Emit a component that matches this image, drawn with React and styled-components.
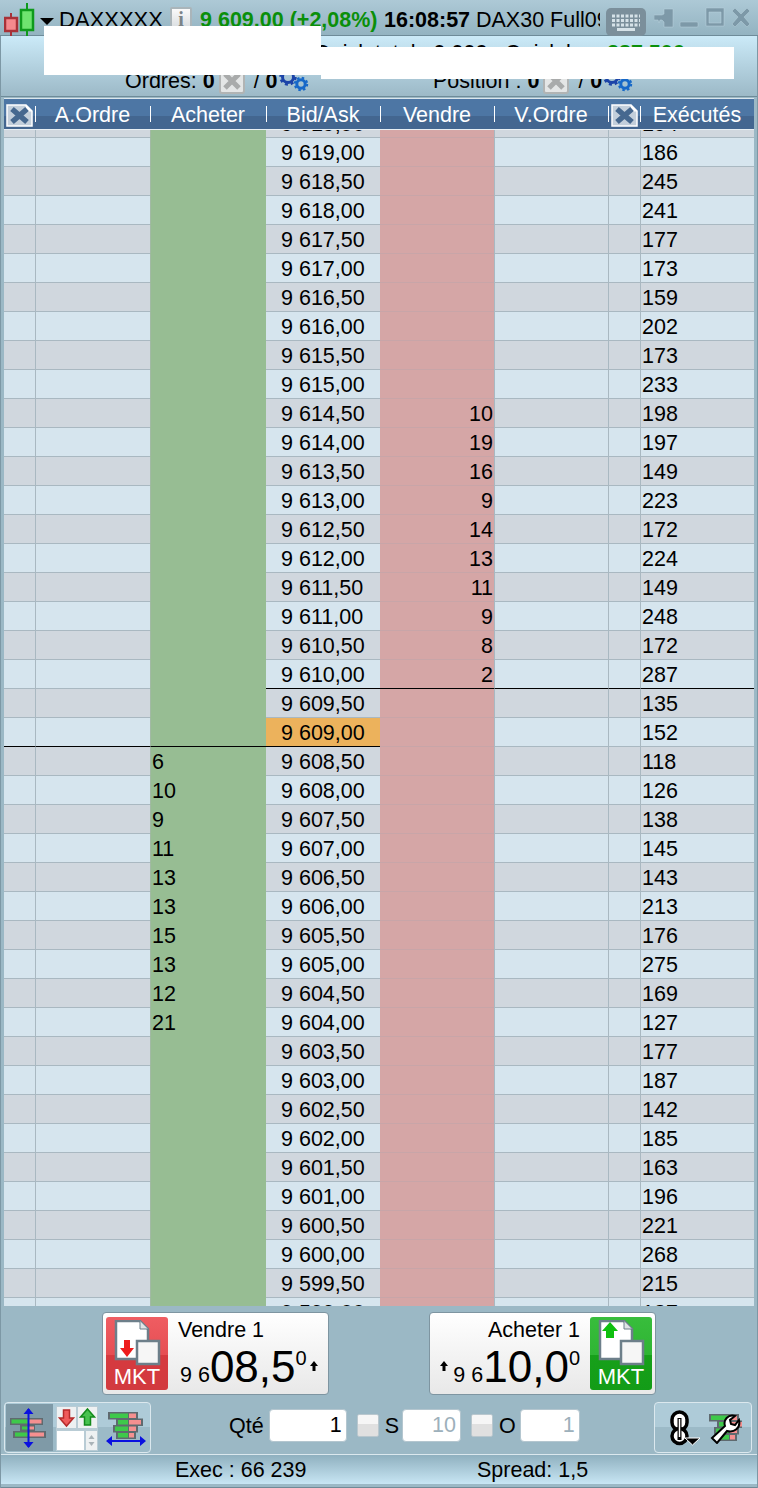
// Libraries
import React from 'react'
import styled, { createGlobalStyle } from 'styled-components'


// ============================================================================================================ Data

const EXECUTED = [
    194, 186, 245, 241, 177, 173, 159, 202, 173, 233, 198, 197, 149, 223, 172, 224, 149, 248, 172, 287, 135,
    152, 118, 126, 138, 145, 143, 213, 176, 275, 169, 127, 177, 187, 142, 185, 163, 196, 221, 268, 215, 187,
]
const SELL = { 9614.5: 10, 9614: 19, 9613.5: 16, 9613: 9, 9612.5: 14, 9612: 13, 9611.5: 11, 9611: 9, 9610.5: 8, 9610: 2 }
const BUY = { 9608.5: 6, 9608: 10, 9607.5: 9, 9607: 11, 9606.5: 13, 9606: 13, 9605.5: 15, 9605: 13, 9604.5: 12, 9604: 21 }

const ROWS = EXECUTED.map((executed, i) => ({ price: 9619.5 - i * 0.5, executed, alt: i % 2 === 0 }))

const formatPrice = (price) => {
    const [whole, decimals] = price.toFixed(2).split('.')
    return `${whole[0]} ${whole.slice(1)},${decimals}`
}


// ============================================================================================================ Icons

const Candles = () => (
    <svg width="32" height="34" viewBox="0 0 32 34">
        <path d="M7 10v24" stroke="#a83238" strokeWidth="2" />
        <rect x="1" y="15" width="12" height="13" fill="#f58a8e" stroke="#a83238" strokeWidth="2.500" />
        <path d="M23 0v33" stroke="#0f9a1c" strokeWidth="2" />
        <rect x="17" y="7" width="12" height="20" fill="#6fe46f" stroke="#0f9a1c" strokeWidth="2.500" />
    </svg>
)

const Keyboard = () => (
    <svg width="40" height="28" viewBox="0 0 40 28">
        <rect width="40" height="28" rx="5" fill="#7b8f9b" />
        <path d="M6 8h28M6 12.500h28M6 17h28" stroke="#d6e2e8" strokeWidth="3" strokeDasharray="3 1.500" />
        <rect x="11" y="20" width="18" height="3" fill="#d6e2e8" />
    </svg>
)

const WindowButtons = () => (
    <svg width="98" height="24" viewBox="0 0 98 24">
        <g fill="#7d99a8" stroke="#b9d2dd" strokeWidth="0.5">
            <path d="M0 9h8l2-1V3h9v18h-9v-5l-2-2H6l-1 3-1-3H0z" />
            <rect x="26" y="16" width="18" height="5" rx="1" />
            <path d="M52 2h18v18H52zM55 6v11h12V6z" fillRule="evenodd" />
            <path d="M78 5l3-3 6 6 6-6 3 3-6 6 6 7-3 3-6-6-6 6-3-3 6-7z" />
        </g>
    </svg>
)

const Gears = () => (
    <svg width="30" height="24" viewBox="0 0 30 24">
        <circle cx="9" cy="8" r="5.500" fill="none" stroke="#1b43a8" strokeWidth="3" />
        <circle cx="9" cy="8" r="7.500" fill="none" stroke="#1b43a8" strokeWidth="2.500" strokeDasharray="3 2.900" />
        <circle cx="22" cy="15" r="4.200" fill="none" stroke="#1668c8" strokeWidth="3" />
        <circle cx="22" cy="15" r="6.200" fill="none" stroke="#1668c8" strokeWidth="2" strokeDasharray="2.500 2.370" />
    </svg>
)

const CancelTile = () => (
    <svg width="26" height="26" viewBox="0 0 26 26">
        <rect x="1" y="1" width="24" height="24" rx="2" fill="#e4e6e6" stroke="#b1b4b4" strokeWidth="2" />
        <path d="M6 6l14 14M20 6L6 20" stroke="#a9abab" strokeWidth="5" />
    </svg>
)

const ClearDoc = () => (
    <svg width="27" height="23" viewBox="0 0 27 23">
        <path d="M1 1h19l6 6v15H1z" fill="#c3cfdb" stroke="#fff" strokeWidth="1.500" />
        <path d="M20 1v6h6" fill="#fff" stroke="#fff" />
        <path d="M6 5l15 13M21 5L6 18" stroke="#46688f" strokeWidth="5.500" />
    </svg>
)

const OrderDoc = ({ up }) => (
    <svg width="62" height="46" viewBox="0 0 62 46">
        <path d="M10 1h24l8 8v30H10z" fill="#fff" stroke="#6d7f8a" strokeWidth="2.500" />
        <path d="M34 1v8h8" fill="#dfe4e6" stroke="#6d7f8a" strokeWidth="1" />
        {up
            ? <path d="M20 2l8 9h-4v7h-8v-7h-4z" fill="#0fbf0f" />
            : <path d="M18 20h6v8h4l-7 9-7-9h4z" fill="#ee1c1c" />}
        <rect x="31" y="21" width="22" height="23" fill="#f6f6f6" stroke="#6d7f8a" strokeWidth="2.500" />
    </svg>
)

const Tick = () => (
    <svg width="8" height="10" viewBox="0 0 8 10">
        <path d="M4 0l4 5H5.500v5h-3V5H0z" fill="#000" />
    </svg>
)

const Bricks = ({ x = 0, y = 0 }) => (
    <g transform={`translate(${x} ${y})`}>
        {[[0, 20, 10], [8, 12, 15], [5, 15, 10], [8, 12, 8]].map(([left, green, red], i) => (
            <g key={i}>
                <rect x={left} y={i * 6.5} width={green + red} height="7.500" fill="#5f6a6f" />
                <rect x={left + 2} y={i * 6.5 + 1.500} width={green - 2} height="4.500" fill="#3ec94a" />
                <rect x={left + green + 1} y={i * 6.5 + 1.500} width={red - 3} height="4.500" fill="#f59090" />
            </g>
        ))}
    </g>
)

const VerticalFit = () => (
    <svg width="38" height="40" viewBox="0 0 38 40">
        <rect x="1" y="10" width="33" height="7" fill="#5f6a6f" />
        <rect x="2.500" y="11.500" width="17" height="4" fill="#3ec94a" />
        <rect x="20" y="11.500" width="12.500" height="4" fill="#f59090" />
        <rect x="11" y="17" width="15" height="6" fill="#5f6a6f" />
        <rect x="13" y="18.500" width="6" height="3" fill="#3ec94a" />
        <rect x="20" y="18.500" width="5" height="3" fill="#f59090" />
        <rect x="4" y="23" width="33" height="7" fill="#5f6a6f" />
        <rect x="6" y="24.500" width="13" height="4" fill="#3ec94a" />
        <rect x="20" y="24.500" width="15" height="4" fill="#f59090" />
        <path d="M19.500 1v38" stroke="#0a10e0" strokeWidth="2" />
        <path d="M19.500 0l5 6h-10zM19.500 40l5-6h-10z" fill="#0a10e0" />
    </svg>
)

const HorizontalFit = () => (
    <svg width="40" height="40" viewBox="0 0 40 40">
        <Bricks x="2" y="4" />
        <path d="M3 33h34" stroke="#0a10e0" strokeWidth="2" />
        <path d="M0 33l6-5v10zM40 33l-6-5v10z" fill="#0a10e0" />
    </svg>
)

const ArrowTile = ({ up }) => (
    <svg width="19" height="21" viewBox="0 0 19 21">
        <rect width="19" height="21" fill="#eef1f2" />
        {up
            ? <path d="M9.500 2l7 8h-4v8h-6v-8h-4z" fill="#47c24f" stroke="#138a1c" strokeWidth="1.500" />
            : <path d="M6.500 3h6v8h4l-7 8-7-8h4z" fill="#ef5a5a" stroke="#b52a2a" strokeWidth="1.500" />}
    </svg>
)

const Spinner = () => (
    <svg width="11" height="19" viewBox="0 0 11 19">
        <rect width="11" height="19" fill="#eef1f2" />
        <path d="M5.500 4l3 4h-6zM5.500 15l3-4h-6z" fill="#a9b3b8" />
    </svg>
)

const ChainLink = () => (
    <svg width="30" height="36" viewBox="0 0 30 36">
        <rect x="2" y="2" width="15" height="18" rx="7.500" fill="#fff" stroke="#000" strokeWidth="3.500" />
        <circle cx="9.500" cy="26" r="7.500" fill="#fff" stroke="#000" strokeWidth="3.500" />
        <path d="M9.500 8v22" stroke="#000" strokeWidth="4" />
        <path d="M9.500 9v18" stroke="#fff" strokeWidth="1.500" />
        <path d="M15 28h15l-7.500 7z" fill="#000" stroke="#fff" strokeWidth="1" />
    </svg>
)

const BrickWrench = () => (
    <svg width="34" height="32" viewBox="0 0 34 32">
        <Bricks x="1" y="2" />
        <path d="M4 26L17 14c-2-6 3-12 10-10l-5 4 1 4 4 1 4-5c2 8-5 13-12 11L9 31z" fill="#fff" stroke="#000" strokeWidth="2" />
    </svg>
)


// ============================================================================================================ Logic

const OrderButton = ({ side, label, head, tail, up }) => {
    const sell = side === 'sell'
    const tile = (
        <Tile $sell={sell}>
            <OrderDoc up={up} />
            <TileText>MKT</TileText>
        </Tile>
    )
    return (
        <OrderCard>
            {sell && tile}
            <OrderBody $sell={sell}>
                <OrderLabel>{label}</OrderLabel>
                <PriceLine>
                    {!sell && <TickSlot $sell={sell}><Tick /></TickSlot>}
                    <PriceHead>{head}</PriceHead>
                    <PriceBig>{tail}</PriceBig>
                    <PriceSup>0</PriceSup>
                    {sell && <TickSlot $sell={sell}><Tick /></TickSlot>}
                </PriceLine>
            </OrderBody>
            {!sell && tile}
        </OrderCard>
    )
}

const LadderRow = ({ row }) => {
    const { price, executed, alt } = row
    const upperLine = price === 9609.5
    const lowerLine = price === 9608.5
    return (
        <Row>
            <Cell $alt={alt} $lower={lowerLine} />
            <Cell $alt={alt} $lower={lowerLine} />
            <BuyCell $lower={lowerLine}>{BUY[price]}</BuyCell>
            <PriceCell $alt={alt} $upper={upperLine} $lower={lowerLine} $last={price === 9609}>
                {formatPrice(price)}
            </PriceCell>
            <SellCell $upper={upperLine}>{SELL[price]}</SellCell>
            <Cell $alt={alt} $upper={upperLine} />
            <Cell $alt={alt} $upper={upperLine} />
            <ExecCell $alt={alt} $upper={upperLine}>{executed}</ExecCell>
        </Row>
    )
}

const App = () => (
    <Window>
        <GlobalStyle />
        <TitleBar>
            <CandleSlot><Candles /></CandleSlot>
            <Caret />
            <Symbol>DAXXXXX</Symbol>
            <InfoBadge>i</InfoBadge>
            <LastPrice>9 609,00 (+2,08%)</LastPrice>
            <Clock>16:08:57</Clock>
            <Contract>DAX30 Full09</Contract>
            <KeyboardSlot><Keyboard /></KeyboardSlot>
            <WindowSlot><WindowButtons /></WindowSlot>
        </TitleBar>

        <InfoStrip>
            <StatsLine>
                <StatFirst>Quick total : <b>0,006</b></StatFirst>
                <StatSecond>Quick bar</StatSecond>
                <StatGain>287,506</StatGain>
            </StatsLine>
            <CountsLine>
                <CountGroup>
                    <span>Ordres: <b>0</b></span>
                    <CancelTile />
                    <CountTotal>/ <b>0</b></CountTotal>
                    <GearSlot><Gears /></GearSlot>
                </CountGroup>
                <CountGroup>
                    <span>Position : <b>0</b></span>
                    <CancelTile />
                    <CountTotal>/ <b>0</b></CountTotal>
                    <GearSlot><Gears /></GearSlot>
                </CountGroup>
            </CountsLine>
        </InfoStrip>
        <MaskLeft />
        <MaskRight />

        <HeaderRow>
            <HeadCell $first><ClearDoc /></HeadCell>
            <HeadCell>A.Ordre</HeadCell>
            <HeadCell>Acheter</HeadCell>
            <HeadCell>Bid/Ask</HeadCell>
            <HeadCell>Vendre</HeadCell>
            <HeadCell>V.Ordre</HeadCell>
            <HeadCell><ClearDoc /></HeadCell>
            <HeadCell>Exécutés</HeadCell>
        </HeaderRow>

        <Ladder>
            <LadderInner>
                {ROWS.map((row) => <LadderRow key={row.price} row={row} />)}
            </LadderInner>
        </Ladder>

        <OrderBar>
            <OrderButton side="sell" label="Vendre 1" head="9 6" tail="08,5" />
            <OrderButton side="buy" label="Acheter 1" head="9 6" tail="10,0" up />
        </OrderBar>

        <ToolRow>
            <ToolBox>
                <ToolActive><VerticalFit /></ToolActive>
                <ArrowGrid>
                    <ArrowRow>
                        <ArrowTile />
                        <ArrowTile up />
                    </ArrowRow>
                    <ArrowRow>
                        <StepField />
                        <Spinner />
                    </ArrowRow>
                </ArrowGrid>
                <ToolPlain><HorizontalFit /></ToolPlain>
            </ToolBox>
            <QtyGroup>
                <QtyLabel $gap={5}>Qté</QtyLabel>
                <QtyField $width={78} readOnly value="1" />
                <Check />
                <QtyLabel $gap={3}>S</QtyLabel>
                <QtyField $width={59} $muted readOnly value="10" />
                <Check />
                <QtyLabel $gap={4}>O</QtyLabel>
                <QtyField $width={60} $muted readOnly value="1" />
            </QtyGroup>
            <SettingsBox>
                <ChainLink />
                <BrickWrench />
            </SettingsBox>
        </ToolRow>

        <StatusBar>
            <StatusExec>Exec : 66 239</StatusExec>
            <StatusSpread>Spread: 1,5</StatusSpread>
        </StatusBar>
    </Window>
)


// ============================================================================================================ Styles

const COLUMNS = '31px 115px 116px 114px 114px 114px 32px 114px'
const LINE = '#a9b8c1'

const GlobalStyle = createGlobalStyle`
    html, body {
        margin: 0;
        padding: 0;
        background: #9bb8c5;
    }
    body {
        font-family: "Liberation Sans", Arial, sans-serif;
        font-size: 21.5px;
        color: #000;
    }
    * {
        box-sizing: border-box;
    }
`

const Window = styled.div`
    position: relative;
    display: flex;
    flex-direction: column;
    width: 758px;
    height: 1488px;
    overflow: hidden;
    background: #9bb8c5;
    box-shadow: inset 1px 0 #7d98a5, inset -1px 0 #7d98a5, inset 0 -1px #6f8a97;
`

const TitleBar = styled.div`
    display: flex;
    align-items: flex-start;
    height: 36px;
    background: linear-gradient(#adc9d6, #93b3c1);
    line-height: 40px;
    white-space: nowrap;
    border-bottom: 1px solid #6e8b99;
`

const CandleSlot = styled.div`
    width: 36px;
    padding: 3px 0 0 4px;
    line-height: 0;
`

const Caret = styled.div`
    width: 0;
    height: 0;
    margin: 18px 5px 0 4px;
    border-left: 7px solid transparent;
    border-right: 7px solid transparent;
    border-top: 7px solid #000;
`

const Symbol = styled.div`
    width: 111px;
    font-size: 22px;
`

const InfoBadge = styled.div`
    width: 22px;
    height: 24px;
    margin: 7px 8px 0 0;
    border: 2px solid #aab5ba;
    border-radius: 2px;
    background: linear-gradient(#fafafa, #d8dcde);
    color: #7c8488;
    font: bold 20px/20px "Liberation Serif", serif;
    text-align: center;
`

const LastPrice = styled.div`
    width: 184px;
    color: #0a8f0a;
    font-weight: bold;
`

const Clock = styled.div`
    width: 92px;
    font-weight: bold;
`

const Contract = styled.div`
    width: 124px;
    margin-right: 6px;
    overflow: hidden;
`

const KeyboardSlot = styled.div`
    width: 48px;
    padding-top: 8px;
    line-height: 0;
`

const WindowSlot = styled.div`
    padding-top: 6px;
    line-height: 0;
`

const InfoStrip = styled.div`
    height: 61px;
    margin: 0 1px;
    background: linear-gradient(#cbeaf8, #9cb9c7);
    border-bottom: 1px solid #6e8b99;
`

const StatsLine = styled.div`
    display: flex;
    height: 24px;
    padding: 5px 0 0 313px;
    line-height: 24px;
    white-space: nowrap;
`

const StatFirst = styled.div`
    width: 191px;
`

const StatSecond = styled.div`
    width: 102px;
`

const StatGain = styled.div`
    color: #0a8f0a;
    font-weight: bold;
`

const CountsLine = styled.div`
    display: flex;
    padding: 8px 0 0 124px;
`

const CountGroup = styled.div`
    display: flex;
    align-items: center;
    gap: 4px;
    width: 308px;
    height: 26px;
    white-space: nowrap;
`

const CountTotal = styled.span`
    margin-left: 5px;
`

const GearSlot = styled.div`
    margin-left: -3px;
    line-height: 0;
`

const MaskLeft = styled.div`
    position: absolute;
    left: 44px;
    top: 26px;
    width: 277px;
    height: 49px;
    background: #fff;
`

const MaskRight = styled.div`
    position: absolute;
    left: 321px;
    top: 47px;
    width: 413px;
    height: 32px;
    background: #fff;
`

const HeaderRow = styled.div`
    display: grid;
    grid-template-columns: ${COLUMNS};
    height: 32px;
    margin: 1px 4px 0;
    border-top: 1px solid #dbe6ec;
    border-bottom: 1px solid #e8eff3;
    background: linear-gradient(#4d76a4 0 58%, #436690 58% 100%);
`

const HeadCell = styled.div`
    position: relative;
    display: flex;
    align-items: center;
    justify-content: center;
    padding-top: 1px;
    color: #fff;
    line-height: 30px;

    &::before {
        content: ${({ $first }) => ($first ? 'none' : '""')};
        position: absolute;
        left: 0;
        top: 7px;
        width: 1px;
        height: 16px;
        background: #fff;
    }
`

const Ladder = styled.div`
    height: 1176px;
    margin: 0 4px;
    overflow: hidden;
`

const LadderInner = styled.div`
    margin-top: -22px;
`

const Row = styled.div`
    display: grid;
    grid-template-columns: ${COLUMNS};
    height: 29px;
`

const markColor = ({ $upper, $lower }) => ($upper || $lower ? '#000' : LINE)

const Cell = styled.div`
    height: 29px;
    border-top: 1px solid ${markColor};
    border-left: 1px solid ${LINE};
    background: ${({ $alt }) => ($alt ? '#d0d7de' : '#d6e5ee')};
    line-height: 31px;
    &:first-child {
        border-left: 0;
    }
`

const BuyCell = styled(Cell)`
    padding-left: 1px;
    background: #97bd93;
    border-top-color: ${({ $lower }) => ($lower ? '#000' : '#97bd93')};
    border-left-color: #a2b9a5;
`

const PriceCell = styled(Cell)`
    padding-left: 15px;
    background: ${({ $alt, $last }) => ($last ? '#ecb25c' : $alt ? '#d0d7de' : '#d6e5ee')};
    border-left: 0;
`

const SellCell = styled(Cell)`
    padding-right: 1px;
    text-align: right;
    background: #d5a6a6;
    border-top-color: ${({ $upper }) => ($upper ? '#000' : '#c8a5a8')};
    border-left: 0;
`

const ExecCell = styled(Cell)`
    padding-left: 1px;
`

const OrderBar = styled.div`
    display: flex;
    gap: 100px;
    height: 95px;
    padding: 6px 0 0 102px;
`

const OrderCard = styled.div`
    display: flex;
    gap: 10px;
    width: 227px;
    height: 83px;
    padding: 4px 3px;
    border: 1px solid #7e95a1;
    border-radius: 4px;
    background: linear-gradient(#ffffff, #e8e8e8);
`

const Tile = styled.div`
    flex: none;
    width: 62px;
    height: 73px;
    padding-top: 3px;
    border-radius: 3px;
    line-height: 0;
    background: ${({ $sell }) => ($sell
        ? 'linear-gradient(#ef5d62, #e64e53 52%, #d63a3f 52%, #d23a3f)'
        : 'linear-gradient(#38bd3c, #2fb534 52%, #17a01a 52%, #139c17)')};
`

const TileText = styled.div`
    color: #fff;
    font-size: 22px;
    line-height: 22px;
    text-align: center;
`

const OrderBody = styled.div`
    display: flex;
    flex: 1;
    flex-direction: column;
    align-items: ${({ $sell }) => ($sell ? 'flex-start' : 'flex-end')};
    padding-top: 1px;
`

const OrderLabel = styled.div`
    height: 26px;
    font-size: 21.5px;
    line-height: 25px;
`

const PriceLine = styled.div`
    display: flex;
    align-items: baseline;
    height: 46px;
    line-height: 46px;
    white-space: nowrap;
`

const PriceHead = styled.span`
    margin-left: 2px;
    font-size: 21.5px;
`

const PriceBig = styled.span`
    font-size: 44px;
`

const PriceSup = styled.span`
    position: relative;
    top: -17px;
    font-size: 20px;
`

const TickSlot = styled.span`
    margin: ${({ $sell }) => ($sell ? '0 0 0 3px' : '0 3px 0 0')};
    position: relative;
    top: -11px;
    line-height: 0;
`

const ToolRow = styled.div`
    display: grid;
    grid-template-columns: 147px 1fr 98px;
    height: 53px;
    padding: 1px 6px 0 4px;
`

const ToolBox = styled.div`
    display: flex;
    height: 51px;
    padding: 1px;
    border: 1px solid #dbe8ee;
    border-radius: 4px;
    background: linear-gradient(#aecbd8 0 50%, #9cbac7 50% 100%);
`

const ToolActive = styled.div`
    display: flex;
    align-items: center;
    justify-content: center;
    width: 47px;
    padding-right: 3px;
    background: #7f9aa7;
`

const ArrowGrid = styled.div`
    display: flex;
    flex-direction: column;
    gap: 3px;
    width: 42px;
    height: 45px;
    margin: 2px 0 0 3px;
    padding: 1px;
    background: #b9ccd5;
`

const ArrowRow = styled.div`
    display: flex;
    gap: 2px;
    line-height: 0;
`

const StepField = styled.div`
    width: 27px;
    height: 19px;
    background: #fff;
`

const ToolPlain = styled.div`
    display: flex;
    align-items: center;
    padding-left: 8px;
`

const QtyGroup = styled.div`
    display: flex;
    align-items: flex-start;
    padding: 7px 0 0 78px;
`

const QtyLabel = styled.div`
    margin-right: ${({ $gap }) => $gap}px;
    line-height: 35px;
`

const QtyField = styled.input`
    width: ${({ $width }) => $width}px;
    height: 33px;
    padding: 0 4px 0 0;
    border: 1px solid #b4c6cf;
    border-radius: 4px;
    outline: none;
    background: #fff;
    color: ${({ $muted }) => ($muted ? '#9db0bb' : '#000')};
    font: 21.5px "Liberation Sans", Arial, sans-serif;
    text-align: right;
`

const Check = styled.div`
    width: 22px;
    height: 23px;
    margin: 5px 6px 0 10px;
    border: 1px solid #b9c7ce;
    border-radius: 2px;
    background: linear-gradient(#f6f6f6 0 45%, #e0e0e0 45% 100%);
`

const SettingsBox = styled.div`
    display: flex;
    align-items: center;
    gap: 8px;
    height: 51px;
    padding-left: 15px;
    border: 1px solid #dbe8ee;
    border-radius: 4px;
    background: linear-gradient(#aecbd8 0 50%, #9cbac7 50% 100%);
`

const StatusBar = styled.div`
    display: grid;
    grid-template-columns: 293px 1fr;
    height: 30px;
    margin: 0 1px;
    border-top: 1px solid #dbe8ee;
    background: linear-gradient(#8fb0bf, #c8e6f4);
    line-height: 31px;
`

const StatusExec = styled.div`
    padding-left: 174px;
    white-space: nowrap;
`

const StatusSpread = styled.div`
    padding-left: 183px;
    white-space: nowrap;
`

export default App
